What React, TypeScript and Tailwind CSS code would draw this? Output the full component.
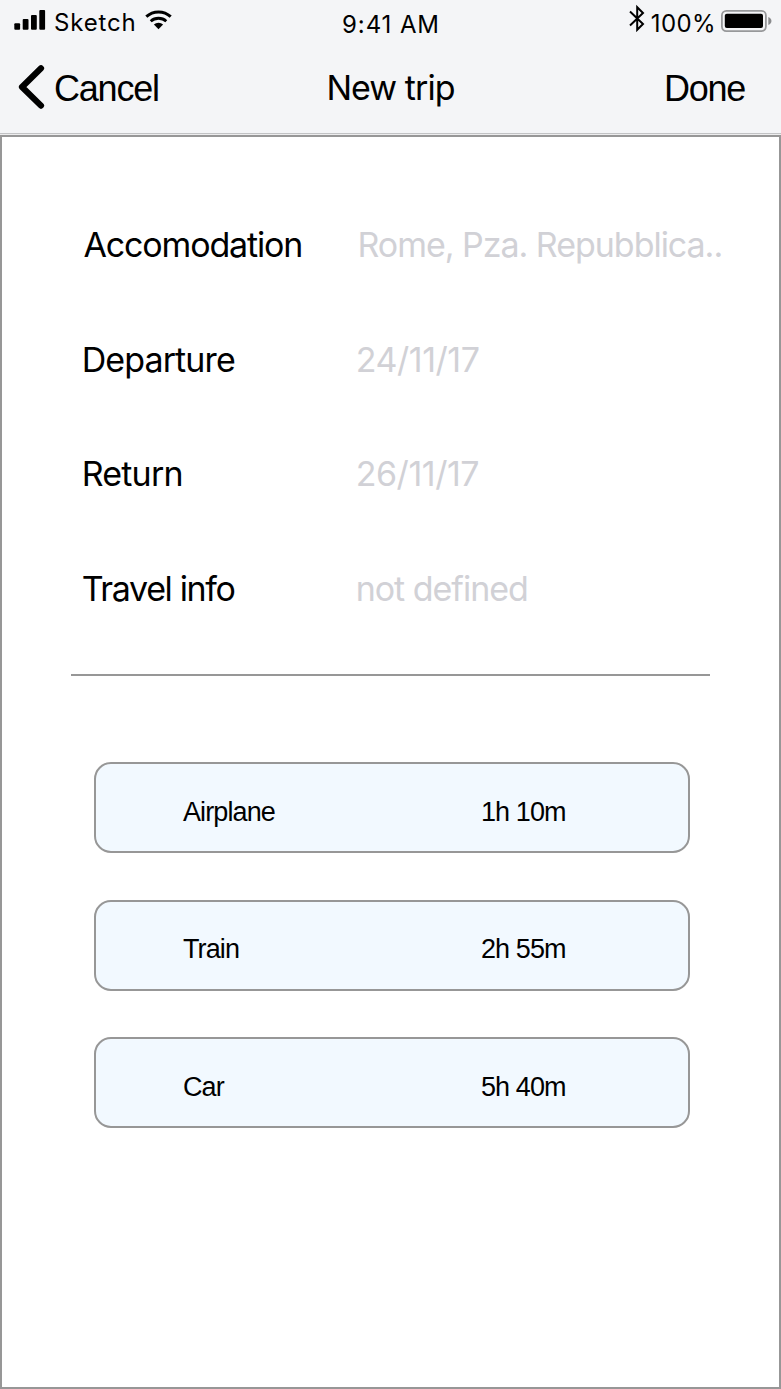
import React from "react";

const inter = "font-['Inter','Noto_Sans',sans-serif]";
const helv = "font-['Liberation_Sans',Arial,sans-serif]";

const fields = [
  { label: "Accomodation", value: "Rome, Pza. Repubblica..", row: "h-[115px] pl-[81.5px]", l: "tracking-[-1.16px]", v: "tracking-[-1.03px]" },
  { label: "Departure", value: "24/11/17", row: "h-[115px] pl-[79.7px]", l: "tracking-[-0.9px]", v: "tracking-[-0.45px]" },
  { label: "Return", value: "26/11/17", row: "h-[114px] pl-[79.7px]", l: "tracking-[-0.8px]", v: "tracking-[-0.45px]" },
  { label: "Travel info", value: "not defined", row: "h-[115px] pl-[79.7px]", l: "tracking-[-1.35px]", v: "tracking-[-1.02px]" },
];

const options = [
  { mode: "Airplane", time: "1h 10m" },
  { mode: "Train", time: "2h 55m" },
  { mode: "Car", time: "5h 40m" },
];

function Signal() {
  return (
    <svg className="block shrink-0" width="32" height="22" viewBox="0 0 32 22">
      <rect x="0.3" y="13.3" width="5.8" height="6.4" rx="1" />
      <rect x="8.7" y="9" width="5.8" height="10.7" rx="1" />
      <rect x="17" y="5" width="5.8" height="14.7" rx="1" />
      <rect x="25.3" y="0" width="5.8" height="19.7" rx="1" />
    </svg>
  );
}

function Wifi() {
  return (
    <svg className="block shrink-0" width="28" height="20" viewBox="0 0 28 20" fill="none" stroke="#000">
      <path d="M1.3 6.7A18 18 0 0 1 25.7 6.7" strokeWidth="3" />
      <path d="M5.7 11.2A11.8 11.8 0 0 1 21.3 11.2" strokeWidth="2.8" />
      <path d="M13.5 19.2L8.9 14.6A6.6 6.6 0 0 1 18.1 14.6Z" fill="#000" stroke="none" />
    </svg>
  );
}

function Bluetooth() {
  return (
    <svg className="block shrink-0" width="16" height="28" viewBox="0 0 16 28" fill="none" stroke="#000" strokeWidth="2">
      <path d="M1 7.5L14 20L8.2 25.8V3.2L14 9L1 21.5" />
    </svg>
  );
}

function Battery() {
  return (
    <svg className="block shrink-0" width="52" height="22" viewBox="0 0 52 22">
      <rect x="0.9" y="0.9" width="44" height="20.2" rx="4.5" fill="none" stroke="#97989a" strokeWidth="1.8" />
      <rect x="3.8" y="3.8" width="38.2" height="14.2" rx="2" />
      <path d="M47.3 7C51.5 8.5 51.5 13.5 47.3 15Z" fill="#8a8b8d" />
    </svg>
  );
}

export default function App() {
  return (
    <div className="flex h-[1389px] w-[781px] flex-col bg-white text-black">
      <header className="h-[135px] border-b border-[#ededee] bg-[#f4f5f7]">
        <div className="h-[134px] border-b border-[#c2c3c5]">
          <div className={`grid h-[44px] grid-cols-3 text-[24px] leading-[28px] ${inter}`}>
            <div className="flex items-start pl-[14px] pt-[8px]">
              <div className="pt-[2px]"><Signal /></div>
              <span className="ml-[8px] pt-[1px] tracking-[0.85px]">Sketch</span>
              <div className="ml-[8px] pt-[2px]"><Wifi /></div>
            </div>
            <div className="flex items-start justify-center pt-[11px]">
              <span className="pl-[1px] tracking-[0.9px]">9:41 AM</span>
            </div>
            <div className="flex items-start justify-end pr-[8px] pt-[4px]">
              <Bluetooth />
              <span className="ml-[6px] pt-[6px] tracking-[0.4px]">100%</span>
              <div className="ml-[5px] pt-[6px]"><Battery /></div>
            </div>
          </div>
          <nav className="grid h-[88px] grid-cols-3 items-center text-[36px] leading-[44px]">
            <button className={`flex items-center pl-[18px] tracking-[-1.2px] ${helv}`}>
              <svg className="mr-[9px] block" width="27" height="46" viewBox="0 0 27 46" fill="none" stroke="#000" strokeWidth="6.2" strokeLinecap="round" strokeLinejoin="round">
                <path d="M23 3.3L4 22L23 40.6" />
              </svg>
              <span className="pt-[2px]">Cancel</span>
            </button>
            <h1 className={`text-center text-[34px] tracking-[-0.95px] ${inter}`}>New trip</h1>
            <button className={`pr-[36px] pt-[2px] text-right tracking-[-1.25px] ${helv}`}>Done</button>
          </nav>
        </div>
      </header>
      <main className="flex-1 border-2 border-[#979797]">
        <div className={`pt-[50px] text-[34px] leading-[40px] ${inter}`}>
          {fields.map((f) => (
            <div key={f.label} className={`flex items-center ${f.row}`}>
              <span className={`w-[274px] shrink-0 ${f.l}`}>{f.label}</span>
              <span className={`whitespace-nowrap text-[#d1d1d6] ${f.v}`}>{f.value}</span>
            </div>
          ))}
        </div>
        <div className="ml-[69px] mt-[28px] h-[2px] w-[639px] bg-[#979797]" />
        <div className={`ml-[92px] mt-[86px] flex w-[595.5px] flex-col gap-[46.5px] text-[27px] leading-[32px] tracking-[-0.9px] ${helv}`}>
          {options.map((o) => (
            <button key={o.mode} className="flex h-[91px] items-center rounded-[17px] border-2 border-[#979797] bg-[#f2f9ff] pl-[87px] pt-[8px] text-left">
              <span className="w-[298px]">{o.mode}</span>
              <span>{o.time}</span>
            </button>
          ))}
        </div>
      </main>
    </div>
  );
}
